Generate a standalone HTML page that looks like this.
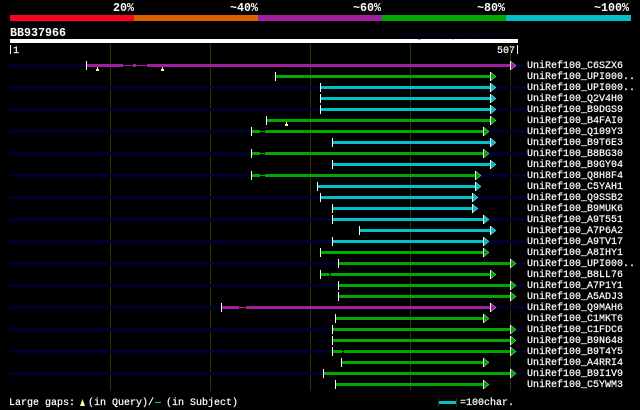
<!DOCTYPE html>
<html><head><meta charset="utf-8"><style>
html,body{margin:0;padding:0;background:#000;width:640px;height:410px;overflow:hidden}
svg{display:block}
text{font-family:"Liberation Mono","DejaVu Sans Mono",monospace;font-size:10px;fill:#fff;stroke:#fff;stroke-width:.2px}
.b{font-size:11.67px;font-weight:bold;stroke-width:0}
rect{shape-rendering:crispEdges}
</style></head><body>
<svg width="640" height="410" viewBox="0 0 640 410" xmlns="http://www.w3.org/2000/svg">
<defs>
<rect id="k" x="0" y="-3" width="1" height="9" fill="#fff"/>
<g id="tg"><polygon points="0.5,-3 6,1.5 0.5,6" fill="#00a800" stroke="#fff" stroke-width=".4"/><rect x="0" y="-3" width="1" height="9" fill="#fff"/></g>
<g id="tc"><polygon points="0.5,-3 6,1.5 0.5,6" fill="#00c0c8" stroke="#fff" stroke-width=".4"/><rect x="0" y="-3" width="1" height="9" fill="#fff"/></g>
<g id="tp"><polygon points="0.5,-3 6,1.5 0.5,6" fill="#a020a0" stroke="#fff" stroke-width=".4"/><rect x="0" y="-3" width="1" height="9" fill="#fff"/></g>
<g id="m"><rect x="0" y="0" width="1" height="2" fill="#ffff99"/><rect x="-1" y="2" width="3" height="2" fill="#ffff99"/></g>
<rect id="n" x="10" y="0" width="515" height="3" fill="#000033"/>
</defs>
<rect width="640" height="410" fill="#000"/>

<text class="b" x="113" y="11">20%</text>
<text class="b" x="230" y="11">~40%</text>
<text class="b" x="353" y="11">~60%</text>
<text class="b" x="477" y="11">~80%</text>
<text class="b" x="594" y="11">~100%</text>

<g>
<rect x="10" y="15" width="124" height="6" fill="#ff0020"/>
<rect x="134" y="15" width="124" height="6" fill="#e06000"/>
<rect x="258" y="15" width="124" height="6" fill="#a020a0"/>
<rect x="382" y="15" width="124" height="6" fill="#00a800"/>
<rect x="506" y="15" width="125" height="6" fill="#00c0c8"/>
<rect x="10" y="39" width="508" height="4" fill="#fff"/>
<g fill="#333300">
<rect x="110" y="44" width="1" height="347"/>
<rect x="210" y="44" width="1" height="347"/>
<rect x="310" y="44" width="1" height="347"/>
<rect x="410" y="44" width="1" height="347"/>
<rect x="510" y="44" width="1" height="347"/>
</g>
</g>

<text class="b" x="10" y="36">BB937966</text>
<text x="402" y="38" style="font-size:8.33px;fill:#000033;stroke:none">AlignView.pm Beta rel.7</text>
<rect x="10" y="45" width="1" height="9" fill="#fff"/>
<text x="13" y="53">1</text>
<text x="497" y="53">507</text>
<rect x="517" y="45" width="1" height="9" fill="#fff"/>

<g transform="translate(0,64)"><use href="#n"/><use href="#k" x="86"/><rect x="87" width="36" height="3" fill="#a020a0"/><rect x="123" width="24" height="3" fill="#000"/><rect x="123" y="1" width="10" height="1" fill="#a020a0"/><rect x="133" width="3" height="3" fill="#a020a0"/><rect x="136" y="1" width="11" height="1" fill="#a020a0"/><rect x="147" width="363" height="3" fill="#a020a0"/><use href="#tp" x="510"/><use href="#m" x="97" y="3"/><use href="#m" x="162" y="3"/><text x="527" y="4">UniRef100_C6SZX6</text></g>
<g transform="translate(0,75)"><use href="#k" x="275"/><rect x="276" width="214" height="3" fill="#00a800"/><use href="#tg" x="490"/><text x="527" y="4">UniRef100_UPI000..</text></g>
<g transform="translate(0,86)"><use href="#n"/><rect x="320" width="170" height="3" fill="#00c0c8"/><use href="#k" x="320"/><use href="#tc" x="490"/><text x="527" y="4">UniRef100_UPI000..</text></g>
<g transform="translate(0,97)"><use href="#k" x="320"/><rect x="321" width="169" height="3" fill="#00c0c8"/><use href="#tc" x="490"/><text x="527" y="4">UniRef100_Q2V4H0</text></g>
<g transform="translate(0,108)"><use href="#n"/><use href="#k" x="320"/><rect x="321" width="169" height="3" fill="#00c0c8"/><use href="#tc" x="490"/><text x="527" y="4">UniRef100_B9DGS9</text></g>
<g transform="translate(0,119)"><use href="#k" x="266"/><rect x="267" width="223" height="3" fill="#00a800"/><use href="#tg" x="490"/><use href="#m" x="286" y="3"/><text x="527" y="4">UniRef100_B4FAI0</text></g>
<g transform="translate(0,130)"><use href="#n"/><use href="#k" x="251"/><rect x="252" width="8" height="3" fill="#00a800"/><rect x="260" width="5" height="3" fill="#000"/><rect x="260" y="1" width="5" height="1" fill="#00a800"/><rect x="265" width="218" height="3" fill="#00a800"/><use href="#tg" x="483"/><text x="527" y="4">UniRef100_Q109Y3</text></g>
<g transform="translate(0,141)"><use href="#k" x="332"/><rect x="333" width="157" height="3" fill="#00c0c8"/><use href="#tc" x="490"/><text x="527" y="4">UniRef100_B9T6E3</text></g>
<g transform="translate(0,152)"><use href="#n"/><use href="#k" x="251"/><rect x="252" width="8" height="3" fill="#00a800"/><rect x="260" width="5" height="3" fill="#000"/><rect x="260" y="1" width="5" height="1" fill="#00a800"/><rect x="265" width="218" height="3" fill="#00a800"/><use href="#tg" x="483"/><text x="527" y="4">UniRef100_B8BG30</text></g>
<g transform="translate(0,163)"><use href="#k" x="332"/><rect x="333" width="157" height="3" fill="#00c0c8"/><use href="#tc" x="490"/><text x="527" y="4">UniRef100_B9GY04</text></g>
<g transform="translate(0,174)"><use href="#n"/><use href="#k" x="251"/><rect x="252" width="8" height="3" fill="#00a800"/><rect x="260" width="5" height="3" fill="#000"/><rect x="260" y="1" width="5" height="1" fill="#00a800"/><rect x="265" width="210" height="3" fill="#00a800"/><use href="#tg" x="475"/><text x="527" y="4">UniRef100_Q8H8F4</text></g>
<g transform="translate(0,185)"><use href="#k" x="317"/><rect x="318" width="157" height="3" fill="#00c0c8"/><use href="#tc" x="475"/><text x="527" y="4">UniRef100_C5YAH1</text></g>
<g transform="translate(0,196)"><use href="#n"/><use href="#k" x="320"/><rect x="321" width="151" height="3" fill="#00c0c8"/><use href="#tc" x="472"/><text x="527" y="4">UniRef100_Q9SSB2</text></g>
<g transform="translate(0,207)"><use href="#k" x="332"/><rect x="333" width="139" height="3" fill="#00c0c8"/><use href="#tc" x="472"/><text x="527" y="4">UniRef100_B9MUK6</text></g>
<g transform="translate(0,218)"><use href="#n"/><use href="#k" x="332"/><rect x="333" width="150" height="3" fill="#00c0c8"/><use href="#tc" x="483"/><text x="527" y="4">UniRef100_A9T551</text></g>
<g transform="translate(0,229)"><use href="#k" x="359"/><rect x="360" width="130" height="3" fill="#00c0c8"/><use href="#tc" x="490"/><text x="527" y="4">UniRef100_A7P6A2</text></g>
<g transform="translate(0,240)"><use href="#n"/><use href="#k" x="332"/><rect x="333" width="150" height="3" fill="#00c0c8"/><use href="#tc" x="483"/><text x="527" y="4">UniRef100_A9TV17</text></g>
<g transform="translate(0,251)"><use href="#k" x="320"/><rect x="321" width="162" height="3" fill="#00a800"/><use href="#tg" x="483"/><text x="527" y="4">UniRef100_A8IHY1</text></g>
<g transform="translate(0,262)"><use href="#n"/><use href="#k" x="338"/><rect x="339" width="171" height="3" fill="#00a800"/><use href="#tg" x="510"/><text x="527" y="4">UniRef100_UPI000..</text></g>
<g transform="translate(0,273)"><use href="#k" x="320"/><rect x="321" width="8" height="3" fill="#00a800"/><rect x="329" y="1" width="2" height="1" fill="#00a800"/><rect x="331" width="159" height="3" fill="#00a800"/><use href="#tg" x="490"/><text x="527" y="4">UniRef100_B8LL76</text></g>
<g transform="translate(0,284)"><use href="#n"/><use href="#k" x="338"/><rect x="339" width="171" height="3" fill="#00a800"/><use href="#tg" x="510"/><text x="527" y="4">UniRef100_A7P1Y1</text></g>
<g transform="translate(0,295)"><use href="#k" x="338"/><rect x="339" width="171" height="3" fill="#00a800"/><use href="#tg" x="510"/><text x="527" y="4">UniRef100_A5ADJ3</text></g>
<g transform="translate(0,306)"><use href="#n"/><use href="#k" x="221"/><rect x="222" width="17" height="3" fill="#a020a0"/><rect x="239" width="7" height="3" fill="#000"/><rect x="239" y="1" width="7" height="1" fill="#a020a0"/><rect x="246" width="244" height="3" fill="#a020a0"/><use href="#tp" x="490"/><text x="527" y="4">UniRef100_Q9MAH6</text></g>
<g transform="translate(0,317)"><use href="#k" x="335"/><rect x="336" width="147" height="3" fill="#00a800"/><use href="#tg" x="483"/><text x="527" y="4">UniRef100_C1MKT6</text></g>
<g transform="translate(0,328)"><use href="#n"/><use href="#k" x="332"/><rect x="333" width="177" height="3" fill="#00a800"/><use href="#tg" x="510"/><text x="527" y="4">UniRef100_C1FDC6</text></g>
<g transform="translate(0,339)"><use href="#k" x="332"/><rect x="333" width="177" height="3" fill="#00a800"/><use href="#tg" x="510"/><text x="527" y="4">UniRef100_B9N648</text></g>
<g transform="translate(0,350)"><use href="#n"/><use href="#k" x="332"/><rect x="333" width="9" height="3" fill="#00a800"/><rect x="342" width="2" height="3" fill="#000"/><rect x="342" y="1" width="2" height="1" fill="#00a800"/><rect x="344" width="166" height="3" fill="#00a800"/><use href="#tg" x="510"/><text x="527" y="4">UniRef100_B9T4Y5</text></g>
<g transform="translate(0,361)"><use href="#k" x="341"/><rect x="342" width="141" height="3" fill="#00a800"/><use href="#tg" x="483"/><text x="527" y="4">UniRef100_A4RRI4</text></g>
<g transform="translate(0,372)"><use href="#n"/><use href="#k" x="323"/><rect x="324" width="186" height="3" fill="#00a800"/><use href="#tg" x="510"/><text x="527" y="4">UniRef100_B9I1V9</text></g>
<g transform="translate(0,383)"><use href="#k" x="335"/><rect x="336" width="147" height="3" fill="#00a800"/><use href="#tg" x="483"/><text x="527" y="4">UniRef100_C5YWM3</text></g>

<text x="9" y="405">Large gaps:</text>
<polygon points="82.5,399 85,406 80,406" fill="#ffff99"/>
<text x="88" y="405">(in Query)/</text>
<rect x="155" y="402" width="6" height="1" fill="#00c0c8"/>
<text x="166" y="405">(in Subject)</text>
<rect x="438" y="398" width="1" height="9" fill="#333300"/>
<rect x="456" y="398" width="1" height="9" fill="#333300"/>
<rect x="439" y="401" width="17" height="3" fill="#00c0c8"/>
<text x="460" y="405">=100char.</text>
</svg>
</body></html>
